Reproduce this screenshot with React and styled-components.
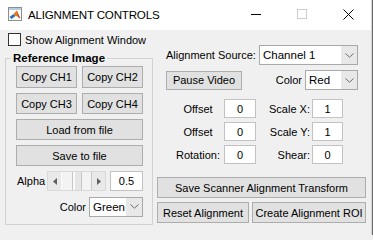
import React from "react";
import styled, { createGlobalStyle } from "styled-components";

const Global = createGlobalStyle`
  html, body { margin: 0; padding: 0; background: #f0f0f0; }
  body { font-family: "Liberation Sans", Arial, sans-serif; font-size: 11px; color: #000; }
  * { box-sizing: border-box; }
`;

const Frame = styled.div`
  width: 373px;
  height: 235px;
  display: flex;
  overflow: hidden;
`;

const Window = styled.div`
  width: 371px;
  display: flex;
  flex-direction: column;
  background: #f0f0f0;
`;

const Edge = styled.div`
  width: 2px;
  background: linear-gradient(to right, #d6d6d6 0 1px, #6a6a6a 1px 2px);
`;

const TitleBar = styled.div`
  height: 30px;
  flex: none;
  background: #fff;
  display: flex;
  align-items: center;
  padding: 0 0 2px 8px;
`;

const Title = styled.span`
  flex: 1;
  margin-left: 6px;
  font-size: 11.6px;
  letter-spacing: -0.2px;
`;

const CaptionBtn = styled.div`
  width: 46px;
  height: 28px;
  display: flex;
  align-items: center;
  justify-content: center;
`;

const Body = styled.div`
  flex: 1;
  display: flex;
  gap: 4px;
  padding-left: 5px;
`;

const LeftCol = styled.div`
  width: 148px;
  display: flex;
  flex-direction: column;
`;

const CheckRow = styled.div`
  display: flex;
  align-items: center;
  gap: 4px;
  height: 13px;
  margin: 3px 0 0 3px;
`;

const CheckBox = styled.span`
  width: 13px;
  height: 13px;
  border: 1px solid #333;
  background: #fff;
  flex: none;
`;

const Group = styled.fieldset`
  margin: 6px 0 0;
  padding: 1px 0 7px 5px;
  border: 1px solid #d2d2d2;
  min-width: 0;
`;

const Legend = styled.legend`
  padding: 0 2px;
  font-weight: bold;
  font-size: 11.5px;
  line-height: 13px;
`;

const GroupInner = styled.div`
  display: flex;
  flex-direction: column;
  gap: 5px;
  padding: 0 9px 0 5px;
`;

const Pair = styled.div`
  display: grid;
  grid-template-columns: 1fr 1fr;
  gap: 5px;
`;

const Btn = styled.button`
  height: ${(p) => p.$h || 21}px;
  width: ${(p) => (p.$w ? `${p.$w}px` : "100%")};
  flex: none;
  padding: 0;
  background: #e1e1e1;
  border: 1px solid #adadad;
  border-radius: 0;
  font-family: "Liberation Sans", Arial, sans-serif;
  font-size: 11px;
  color: #000;
  white-space: nowrap;
`;

const AlphaRow = styled.div`
  display: flex;
  align-items: center;
  height: 20px;
`;

const AlphaLabel = styled.span`
  width: 31px;
  padding-left: 1px;
  flex: none;
`;

const Slider = styled.div`
  width: 59px;
  height: 20px;
  flex: none;
  display: flex;
  background: #e9e9e9;
  border: 1px solid #d9d9d9;
`;

const SArrow = styled.div`
  width: 14px;
  flex: none;
  display: flex;
  align-items: center;
  justify-content: center;
  background: #e9e9e9;
  ${(p) => (p.$side === "left" ? "border-right: 1px solid #fbfbfb;" : "border-left: 1px solid #c9c9c9;")}
`;

const STrack = styled.div`
  flex: 1;
  display: flex;
  justify-content: center;
  background: #f3f3f3;
`;

const SThumb = styled.div`
  width: 10px;
  background: #e6e6e6;
  border-left: 1px solid #c6c6c6;
  border-right: 1px solid #c6c6c6;
  box-shadow: inset 2px 0 0 #fbfbfb;
`;

const Edit = styled.div`
  height: ${(p) => p.$h || 19}px;
  ${(p) => (p.$grow ? "flex: 1; margin-left: 4px;" : "width: 100%;")}
  background: #fff;
  border: 1px solid #c2c2c2;
  display: flex;
  align-items: center;
  justify-content: center;
  font-size: 11px;
`;

const ColorRow = styled.div`
  display: flex;
  align-items: center;
  justify-content: flex-end;
  gap: 3px;
  height: 21px;
`;

const Select = styled.div`
  width: ${(p) => p.$w}px;
  height: ${(p) => p.$h || 20}px;
  flex: none;
  display: flex;
  background: #fff;
  border: 1px solid #a9a9a9;
`;

const SelText = styled.span`
  flex: 1;
  display: flex;
  align-items: center;
  padding-left: 3px;
  font-size: 11.5px;
`;

const SelArrow = styled.span`
  width: 16px;
  display: flex;
  align-items: center;
  justify-content: center;
  background: #e8e8e8;
`;

const RightCol = styled.div`
  width: 209px;
  display: flex;
  flex-direction: column;
  padding-top: 15px;
`;

const TopRow = styled.div`
  display: flex;
  align-items: center;
  height: 20px;
  padding: 0 8px 0 9px;
  margin-top: ${(p) => p.$mt || 0}px;
`;

const RowLabel = styled.span`
  margin-left: ${(p) => (p.$auto ? "auto" : "0")};
  margin-right: 3px;
  white-space: nowrap;
`;

const ParamGrid = styled.div`
  display: grid;
  grid-template-columns: 48px 32px 56px 31px;
  grid-auto-rows: 19px;
  row-gap: 4px;
  align-items: center;
  padding-left: 19px;
  margin-top: 9px;
`;

const ParamLabel = styled.span`
  text-align: ${(p) => p.$align};
  padding-right: ${(p) => (p.$align === "right" ? 2 : 4)}px;
  white-space: nowrap;
`;

const WideBtnWrap = styled.div`
  margin-top: ${(p) => p.$mt}px;
  display: flex;
  gap: 3px;
`;

const Chevron = () => (
  <svg width="9" height="5" viewBox="0 0 9 5">
    <path d="M0.5 0.5 L4.5 4.2 L8.5 0.5" fill="none" stroke="#6b6b6b" strokeWidth="1" />
  </svg>
);

const Tri = ({ dir }) => (
  <svg width="4" height="7" viewBox="0 0 4 7">
    {dir === "left" ? <path d="M4 0 L0 3.5 L4 7 Z" fill="#606060" /> : <path d="M0 0 L4 3.5 L0 7 Z" fill="#606060" />}
  </svg>
);

const Dropdown = ({ w, value }) => (
  <Select $w={w}>
    <SelText>{value}</SelText>
    <SelArrow>
      <Chevron />
    </SelArrow>
  </Select>
);

const AppIcon = () => (
  <svg width="14" height="14" viewBox="0 0 14 14">
    <rect x="0.5" y="0.5" width="13" height="13" fill="#fff" stroke="#8d8d8d" />
    <rect x="1" y="1" width="12" height="2" fill="#b4cde6" />
    <path d="M1.5 10 L5.5 7 L7.5 9 L3.5 12 Z" fill="#2f6db3" />
    <path d="M5.5 7 L8.8 3.6 L12.2 11.5 L9 9.2 L7.5 9 Z" fill="#e8781e" />
    <path d="M8.8 3.6 L12.2 11.5 L10.6 10.4 Z" fill="#b8321e" />
  </svg>
);

export default function App() {
  return (
    <>
      <Global />
      <Frame>
        <Window>
          <TitleBar>
            <AppIcon />
            <Title>ALIGNMENT CONTROLS</Title>
            <CaptionBtn>
              <svg width="10" height="10" viewBox="0 0 10 10">
                <path d="M0 5.5 H10" stroke="#000" strokeWidth="1" />
              </svg>
            </CaptionBtn>
            <CaptionBtn>
              <svg width="10" height="10" viewBox="0 0 10 10">
                <rect x="0.5" y="0.5" width="9" height="9" fill="none" stroke="#cccccc" />
              </svg>
            </CaptionBtn>
            <CaptionBtn>
              <svg width="11" height="11" viewBox="0 0 11 11">
                <path d="M0.5 0.5 L10.5 10.5 M10.5 0.5 L0.5 10.5" stroke="#000" strokeWidth="1" />
              </svg>
            </CaptionBtn>
          </TitleBar>
          <Body>
            <LeftCol>
              <CheckRow>
                <CheckBox />
                <span>Show Alignment Window</span>
              </CheckRow>
              <Group>
                <Legend>Reference Image</Legend>
                <GroupInner>
                  <Pair>
                    <Btn $h={22}>Copy CH1</Btn>
                    <Btn $h={22}>Copy CH2</Btn>
                  </Pair>
                  <Pair>
                    <Btn>Copy CH3</Btn>
                    <Btn>Copy CH4</Btn>
                  </Pair>
                  <Btn>Load from file</Btn>
                  <Btn>Save to file</Btn>
                  <AlphaRow>
                    <AlphaLabel>Alpha</AlphaLabel>
                    <Slider>
                      <SArrow $side="left">
                        <Tri dir="left" />
                      </SArrow>
                      <STrack>
                        <SThumb />
                      </STrack>
                      <SArrow $side="right">
                        <Tri dir="right" />
                      </SArrow>
                    </Slider>
                    <Edit $grow $h={20}>0.5</Edit>
                  </AlphaRow>
                  <ColorRow>
                    <span>Color</span>
                    <Dropdown w={54} value="Green" />
                  </ColorRow>
                </GroupInner>
              </Group>
            </LeftCol>
            <RightCol>
              <TopRow>
                <RowLabel>Alignment Source:</RowLabel>
                <span style={{ marginLeft: "auto" }} />
                <Dropdown w={99} value="Channel 1" />
              </TopRow>
              <TopRow $mt={5}>
                <Btn $w={76} $h={19}>Pause Video</Btn>
                <RowLabel $auto>Color</RowLabel>
                <Dropdown w={53} value="Red" />
              </TopRow>
              <ParamGrid>
                <ParamLabel $align="center">Offset</ParamLabel>
                <Edit>0</Edit>
                <ParamLabel $align="right">Scale X:</ParamLabel>
                <Edit>1</Edit>
                <ParamLabel $align="center">Offset</ParamLabel>
                <Edit>0</Edit>
                <ParamLabel $align="right">Scale Y:</ParamLabel>
                <Edit>1</Edit>
                <ParamLabel $align="center">Rotation:</ParamLabel>
                <Edit>0</Edit>
                <ParamLabel $align="right">Shear:</ParamLabel>
                <Edit>0</Edit>
              </ParamGrid>
              <WideBtnWrap $mt={13}>
                <Btn>Save Scanner Alignment Transform</Btn>
              </WideBtnWrap>
              <WideBtnWrap $mt={4}>
                <Btn $w={92}>Reset Alignment</Btn>
                <Btn $w={114}>Create Alignment ROI</Btn>
              </WideBtnWrap>
            </RightCol>
          </Body>
        </Window>
        <Edge />
      </Frame>
    </>
  );
}
